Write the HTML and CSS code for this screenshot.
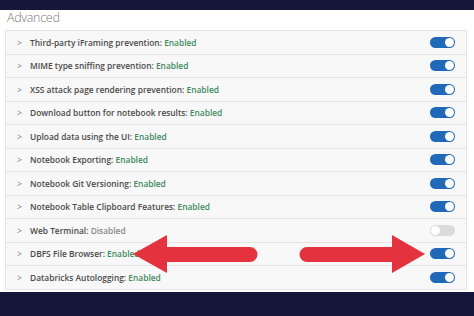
FILE: index.html
```html
<!DOCTYPE html>
<html lang="en">
<head>
    <meta charset="UTF-8">
    <meta name="viewport" content="width=device-width, initial-scale=1.0">
    <title>Advanced Settings</title>
    <link rel="stylesheet" href="styles.css">
</head>
<body>

    <div class="topbar"></div>

    <div class="page">
        <h2>Advanced</h2>

        <!-- Settings list -->
        <ul class="settings">
            <li class="row"><span class="chev">&gt;</span><span class="label">Third-party iFraming prevention: <span class="on">Enabled</span></span><span class="toggle"></span></li>
            <li class="row"><span class="chev">&gt;</span><span class="label">MIME type sniffing prevention: <span class="on">Enabled</span></span><span class="toggle"></span></li>
            <li class="row"><span class="chev">&gt;</span><span class="label">XSS attack page rendering prevention: <span class="on">Enabled</span></span><span class="toggle"></span></li>
            <li class="row"><span class="chev">&gt;</span><span class="label">Download button for notebook results: <span class="on">Enabled</span></span><span class="toggle"></span></li>
            <li class="row"><span class="chev">&gt;</span><span class="label">Upload data using the UI: <span class="on">Enabled</span></span><span class="toggle"></span></li>
            <li class="row"><span class="chev">&gt;</span><span class="label">Notebook Exporting: <span class="on">Enabled</span></span><span class="toggle"></span></li>
            <li class="row"><span class="chev">&gt;</span><span class="label">Notebook Git Versioning: <span class="on">Enabled</span></span><span class="toggle"></span></li>
            <li class="row"><span class="chev">&gt;</span><span class="label">Notebook Table Clipboard Features: <span class="on">Enabled</span></span><span class="toggle"></span></li>
            <li class="row"><span class="chev">&gt;</span><span class="label">Web Terminal: <span class="off">Disabled</span></span><span class="toggle disabled"></span></li>
            <li class="row"><span class="chev">&gt;</span><span class="label">DBFS File Browser: <span class="on">Enabled</span></span><span class="toggle"></span></li>
            <li class="row"><span class="chev">&gt;</span><span class="label">Databricks Autologging: <span class="on">Enabled</span></span><span class="toggle"></span></li>
        </ul>
    </div>

    <div class="bottombar"></div>

    <!-- Red arrows pointing at the DBFS row -->
    <svg class="arrows" width="474" height="316" viewBox="0 0 474 316">
        <path d="M133 254 L167 235 L167 247 L250 247 A7.5 7.5 0 0 1 250 262 L167 262 L167 273 Z" fill="#e5323f"/>
        <path d="M425 254 L392 235 L392 247 L307 247 A7.5 7.5 0 0 0 307 262 L392 262 L392 273 Z" fill="#e5323f"/>
    </svg>

</body>
</html>
```

FILE: styles.css
```css
body {
    margin: 0;
    width: 474px;
    height: 316px;
    overflow: hidden;
    background: #fff;
    font-family: 'Open Sans', sans-serif;
    position: relative;
}

.topbar {
    height: 10px;
    background: #15163a;
}

.page {
    height: 282px;
}

h2 {
    margin: 0;
    padding: 0 0 0 7px;
    height: 20px;
    line-height: 16px;
    font-size: 12.5px;
    font-weight: 300;
    letter-spacing: -0.3px;
    color: #7a7a7a;
}

.settings {
    list-style: none;
    margin: 0 0 0 5px;
    padding: 0;
    width: 462px;
    border: 1px solid #e4e4e4;
    border-bottom: none;
    box-sizing: border-box;
}

.row {
    display: flex;
    align-items: center;
    height: 23.5px;
    box-sizing: border-box;
    padding: 0 11px 0 11px;
    background: #f8f8f8;
    border-bottom: 1.5px solid #e4e4e4;
    font-size: 8.4px;
    font-weight: 600;
    color: #4a4a4a;
}

.chev {
    width: 13px;
    color: #7a7a7a;
    font-weight: 400;
}

.label {
    flex: 1;
}

.on {
    color: #3f8a5e;
}

.off {
    color: #8a8a8a;
}

.toggle {
    position: relative;
    width: 25px;
    height: 11px;
    border-radius: 6px;
    background: #2069b8;
}

.toggle::after {
    content: '';
    position: absolute;
    top: 1px;
    right: 1px;
    width: 9px;
    height: 9px;
    border-radius: 50%;
    background: #fff;
}

.toggle.disabled {
    background: #dadada;
}

.toggle.disabled::after {
    right: auto;
    left: 1px;
}

.bottombar {
    height: 24px;
    background: #15163a;
}

.arrows {
    position: absolute;
    left: 0;
    top: 0;
}
```
